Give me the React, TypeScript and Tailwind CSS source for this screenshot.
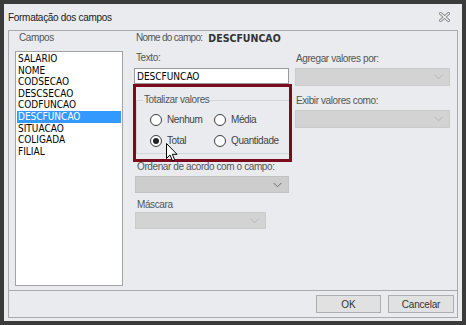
import React from 'react';

const fields = ['SALARIO', 'NOME', 'CODSECAO', 'DESCSECAO', 'CODFUNCAO', 'DESCFUNCAO', 'SITUACAO', 'COLIGADA', 'FILIAL'];

const label = "text-[10px] leading-[14px] text-[#555] tracking-[-0.4px] font-['Liberation_Sans',sans-serif]";

const Chevron: React.FC<{ color: string }> = ({ color }) => (
    <svg width="9" height="6" viewBox="0 0 9 6" fill="none">
        <path d="M0.5 0.8 L4.5 4.8 L8.5 0.8" stroke={color} strokeWidth="1" />
    </svg>
);

const Select: React.FC<{ w: string; h: string; dark?: boolean }> = ({ w, h, dark }) => (
    <div className={`${w} ${h} flex items-center justify-end pr-[6px] ${dark ? 'bg-[#cdcdcd] border border-[#c2c2c2]' : 'bg-[#d3d3d3] border border-[#cbcbcb]'}`}>
        <Chevron color={dark ? '#707070' : '#b4b4b4'} />
    </div>
);

const Radio: React.FC<{ text: string; checked?: boolean }> = ({ text, checked }) => (
    <div className="flex items-center h-[16px]">
        <div className="w-[12px] h-[12px] rounded-full border border-[#3c3c3c] bg-white flex items-center justify-center">
            {checked && <div className="w-[6px] h-[6px] rounded-full bg-[#222]" />}
        </div>
        <span className="ml-[5px] text-[10px] leading-[14px] text-[#444] tracking-[-0.4px] font-['Liberation_Sans',sans-serif]">{text}</span>
    </div>
);

export default function App() {
    return (
        <div className="w-[466px] h-[325px] bg-[#3b3b3b] pt-[4px] pl-[4px]">
            <div className="w-[458px] h-[317px] bg-[#e9ebee] flex flex-col relative">
                {/* title bar */}
                <div className="h-[26px] flex items-center justify-between pl-[4px] pr-[12px]">
                    <span className="text-[10px] tracking-[-0.3px] text-[#222] font-['Liberation_Sans',sans-serif]">Formatação dos campos</span>
                    <svg width="11" height="10" viewBox="0 0 11 10">
                        <path d="M1.5 1.5 L9.5 8.5 M9.5 1.5 L1.5 8.5" stroke="#8c8c8c" strokeWidth="3" strokeLinecap="square" />
                        <path d="M1.5 1.5 L9.5 8.5 M9.5 1.5 L1.5 8.5" stroke="#f4f4f4" strokeWidth="1.2" strokeLinecap="square" />
                    </svg>
                </div>

                <div className="mx-[4px] h-[288px] border border-[#a8aaae] flex flex-col">
                    <div className="h-[259px] flex pl-[6px]">
                        {/* left column */}
                        <div className="w-[108px] flex flex-col">
                            <div className={`${label} pl-[4px] mb-[6px]`}>Campos</div>
                            <div className="h-[235px] bg-white border border-[#a3a3a3] p-[1px]">
                                {fields.map(f => (
                                    <div
                                        key={f}
                                        className={`h-[11.6px] leading-[11.6px] px-[1px] text-[10px] font-['DejaVu_Sans_Condensed','DejaVu_Sans',sans-serif] ${f === 'DESCFUNCAO' ? 'bg-[#3399ff] text-white' : 'text-black'}`}
                                    >
                                        {f}
                                    </div>
                                ))}
                            </div>
                        </div>

                        {/* middle column */}
                        <div className="w-[155px] ml-[11px] flex flex-col">
                            <div className="flex items-center h-[14px]">
                                <span className="text-[10px] leading-[14px] text-[#555] tracking-[-0.7px] font-['Liberation_Sans',sans-serif] pl-[2px]">Nome do campo:</span>
                                <span className="ml-[6px] text-[10.5px] leading-[14px] font-bold text-[#333] font-['DejaVu_Sans_Condensed','DejaVu_Sans',sans-serif]">DESCFUNCAO</span>
                            </div>
                            <div className={`${label} pl-[2px] mt-[6px]`}>Texto:</div>
                            <div className="mt-[3px] h-[16px] bg-white border border-[#9a9a9a] flex items-center pl-[2px] text-[10px] text-black font-['DejaVu_Sans_Condensed','DejaVu_Sans',sans-serif]">
                                DESCFUNCAO
                            </div>

                            <div className="relative mt-[16px] ml-[2px] w-[154px] h-[54px] border border-[#d4d5d8] pl-[13px] pt-[11px]">
                                <span className={`${label} absolute -top-[8px] left-[6px] bg-[#e9ebee] px-[1px] text-[#333]`}>Totalizar valores</span>
                                <div className="grid grid-cols-[64px_auto] gap-y-[5px]">
                                    <Radio text="Nenhum" />
                                    <Radio text="Média" />
                                    <Radio text="Total" checked />
                                    <Radio text="Quantidade" />
                                </div>
                            </div>

                            <div className={`${label} pl-[3px] mt-[6px]`}>Ordenar de acordo com o campo:</div>
                            <div className="mt-[2px] ml-[1px]">
                                <Select w="w-[154px]" h="h-[17px]" dark />
                            </div>
                            <div className={`${label} pl-[3px] mt-[5px]`}>Máscara</div>
                            <div className="ml-[1px]">
                                <Select w="w-[131px]" h="h-[17px]" />
                            </div>
                        </div>

                        {/* right column */}
                        <div className="w-[155px] ml-[6px] flex flex-col">
                            <div className={`${label} pl-[1px] mt-[21px]`}>Agregar valores por:</div>
                            <div className="mt-[2px]">
                                <Select w="w-[155px]" h="h-[18px]" />
                            </div>
                            <div className={`${label} pl-[1px] mt-[8px]`}>Exibir valores como:</div>
                            <div className="mt-[2px]">
                                <Select w="w-[155px]" h="h-[18px]" />
                            </div>
                        </div>
                    </div>

                    {/* footer */}
                    <div className="flex-1 border-t border-[#a8aaae] flex justify-end gap-[7px] pt-[4px] pr-[3px]">
                        <button className="w-[65px] h-[18px] bg-[#e1e1e1] border border-[#adadad] text-[10px] text-[#333] font-['Liberation_Sans',sans-serif]">OK</button>
                        <button className="w-[66px] h-[18px] bg-[#e1e1e1] border border-[#adadad] text-[10px] text-[#333] tracking-[-0.2px] font-['Liberation_Sans',sans-serif]">Cancelar</button>
                    </div>
                </div>

                {/* annotation frame */}
                <div className="absolute left-[129px] top-[80px] w-[159px] h-[78px] border-[3px] border-[#7b0c1d] pointer-events-none" />

                {/* mouse cursor */}
                <svg className="absolute left-[162px] top-[139px]" width="13" height="19" viewBox="0 0 13 19">
                    <path d="M0.5 0.5 L0.5 15.5 L4 12 L6.5 17.8 L8.7 16.9 L6.3 11.3 L11 11.3 Z" fill="white" stroke="black" strokeWidth="1" strokeLinejoin="miter" />
                </svg>
            </div>
        </div>
    );
}
